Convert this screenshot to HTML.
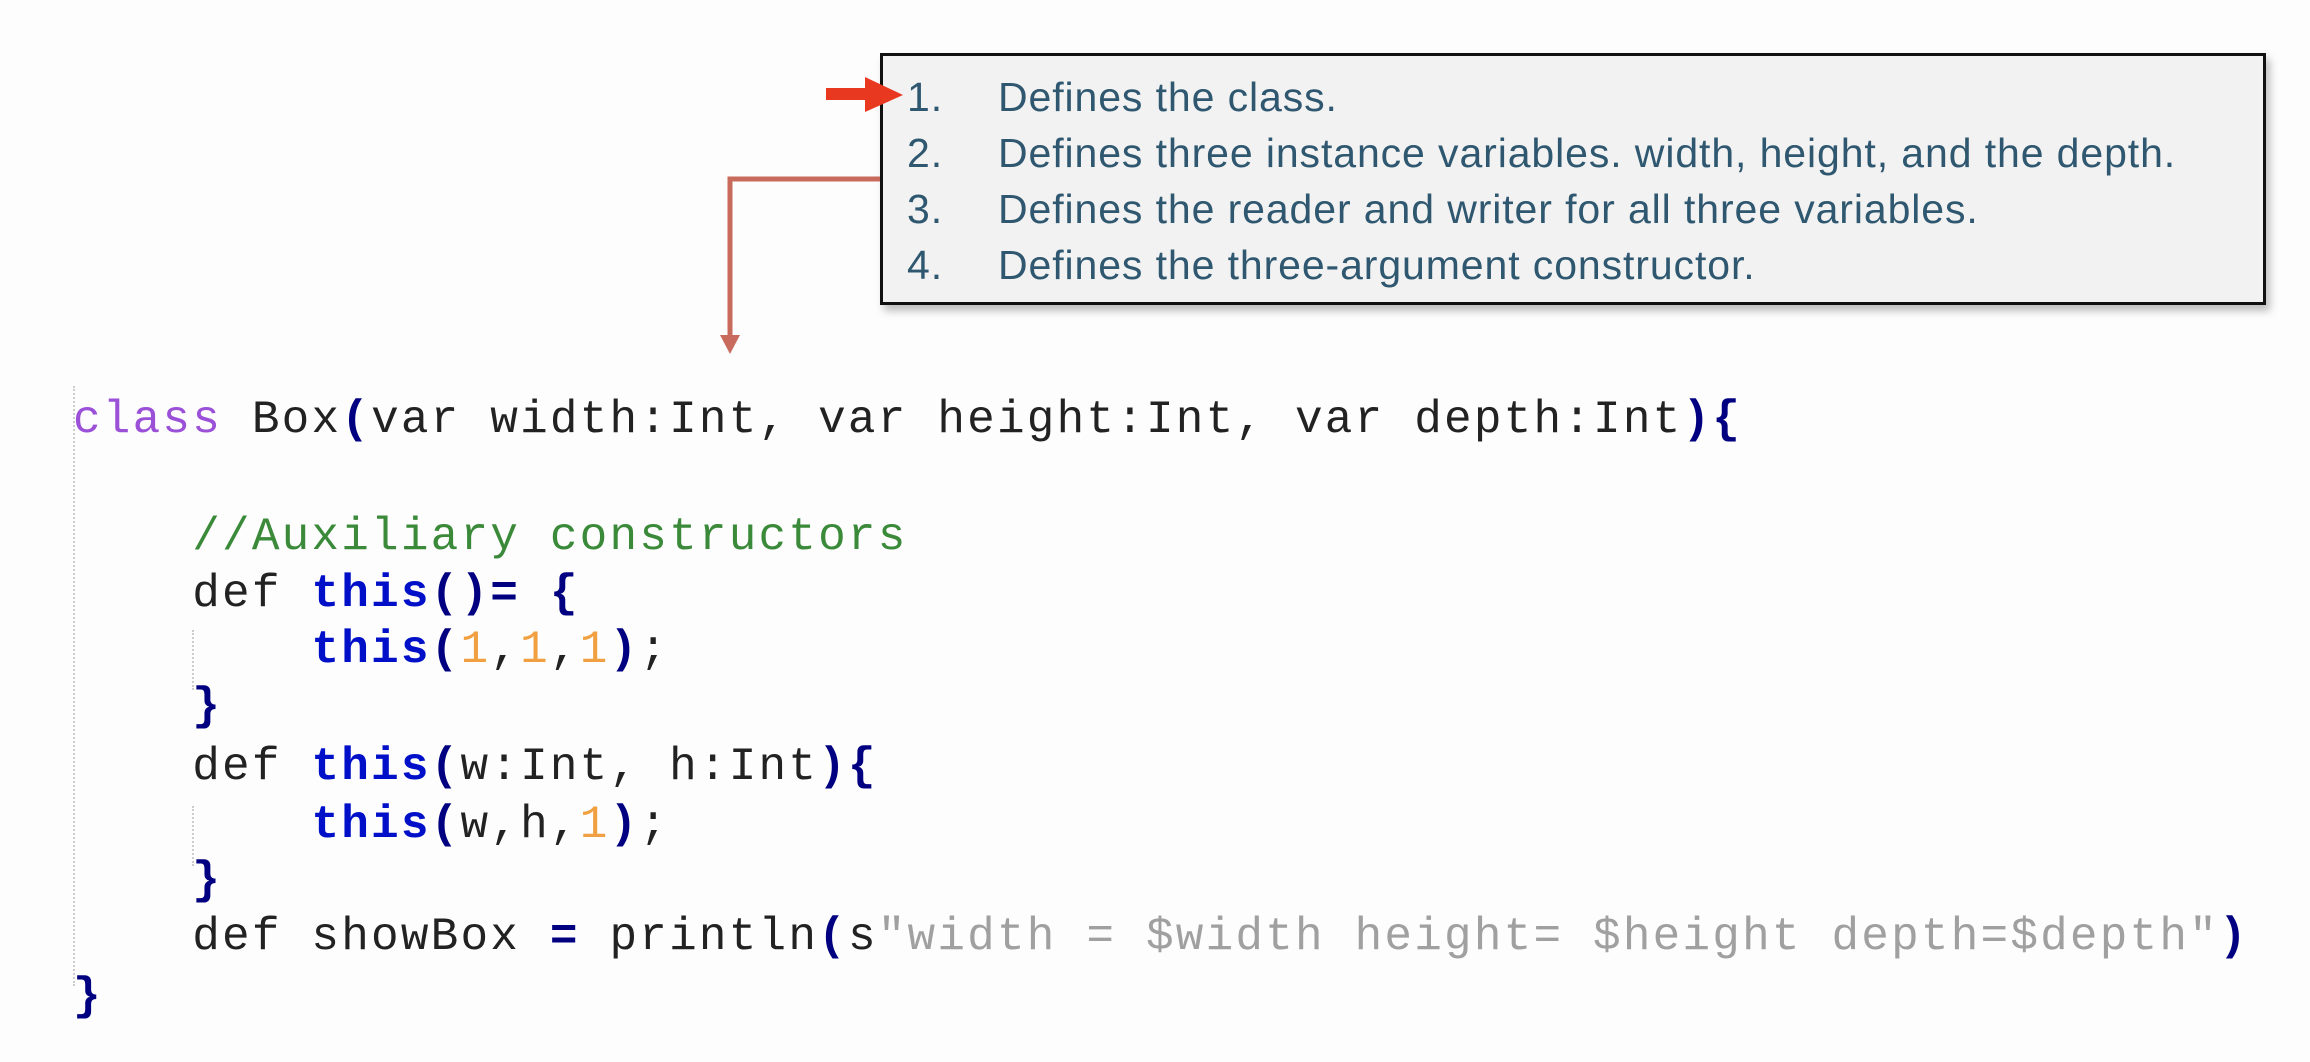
<!DOCTYPE html>
<html><head><meta charset="utf-8"><style>
html,body{margin:0;padding:0;}
body{width:2310px;height:1062px;background:#fdfdfd;position:relative;overflow:hidden;}
.box{position:absolute;left:880px;top:53px;width:1380px;height:246px;background:#f2f2f2;border:3px solid #111;box-shadow:4px 6px 8px rgba(0,0,0,0.25);}
.t{position:absolute;font-family:"Liberation Sans Narrow","Liberation Sans",sans-serif;font-size:41px;letter-spacing:0.9px;color:#2f5870;white-space:pre;line-height:1;}
.c{position:absolute;left:73px;font-family:"Liberation Mono",monospace;font-size:46px;letter-spacing:2.2px;white-space:pre;color:#222;line-height:1;}
.k{color:#9b50d8}.cm{color:#3a8a3a}.b{color:#0010c8;font-weight:bold}.p{color:#000080;font-weight:bold}.n{color:#f0a040}.s{color:#a0a0a0}
.g{position:absolute;border-left:2px dotted #ccc;}
</style></head><body>
<div class="box"></div>
<div class="t" style="left:907px;top:77px">1.</div><div class="t" style="left:998px;top:77px">Defines the class.</div>
<div class="t" style="left:907px;top:133px">2.</div><div class="t" style="left:998px;top:133px">Defines three instance variables. width, height, and the depth.</div>
<div class="t" style="left:907px;top:189px">3.</div><div class="t" style="left:998px;top:189px">Defines the reader and writer for all three variables.</div>
<div class="t" style="left:907px;top:245px">4.</div><div class="t" style="left:998px;top:245px">Defines the three-argument constructor.</div>
<svg style="position:absolute;left:0;top:0" width="2310" height="1062">
<polygon points="826,88 865,88 865,77 903,95 865,112 865,100 826,100" fill="#e8381f"/>
<polyline points="880,179 730,179 730,336" fill="none" stroke="#c86a5c" stroke-width="5"/>
<polygon points="720,335 740,335 730,354" fill="#c86a5c"/>
</svg>
<div class="g" style="left:73px;top:386px;height:600px"></div>
<div class="g" style="left:192px;top:630px;height:60px"></div>
<div class="g" style="left:192px;top:806px;height:60px"></div>
<div class="c" style="top:397px"><span class="k">class</span> Box<span class="p">(</span>var width:Int, var height:Int, var depth:Int<span class="p">){</span></div>
<div class="c" style="top:514px">    <span class="cm">//Auxiliary constructors</span></div>
<div class="c" style="top:571px">    def <span class="b">this</span><span class="p">()= {</span></div>
<div class="c" style="top:627px">        <span class="b">this</span><span class="p">(</span><span class="n">1</span>,<span class="n">1</span>,<span class="n">1</span><span class="p">)</span>;</div>
<div class="c" style="top:684px">    <span class="p">}</span></div>
<div class="c" style="top:744px">    def <span class="b">this</span><span class="p">(</span>w:Int, h:Int<span class="p">){</span></div>
<div class="c" style="top:802px">        <span class="b">this</span><span class="p">(</span>w,h,<span class="n">1</span><span class="p">)</span>;</div>
<div class="c" style="top:858px">    <span class="p">}</span></div>
<div class="c" style="top:914px">    def showBox <span class="p">=</span> println<span class="p">(</span>s<span class="s">"width = $width height= $height depth=$depth"</span><span class="p">)</span></div>
<div class="c" style="top:974px"><span class="p">}</span></div>
</body></html>
